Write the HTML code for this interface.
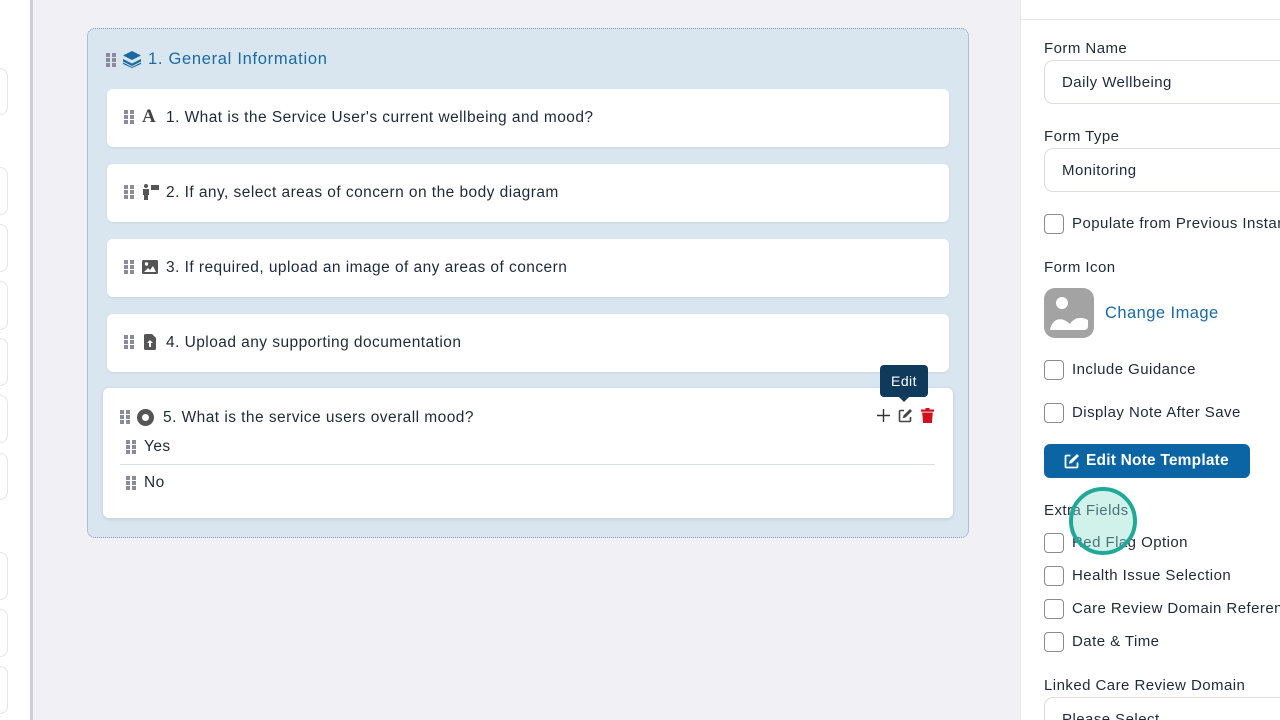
<!DOCTYPE html>
<html><head><style>
*{box-sizing:border-box;margin:0;padding:0}
html,body{width:1280px;height:720px;overflow:hidden}
body{background:#f1f0f5;font-family:"Liberation Sans",sans-serif;color:#1e2a3a;position:relative;letter-spacing:0.45px}
.abs{position:absolute}
.left{left:0;top:0;width:33px;height:720px;background:#fff;border-right:3px solid #cfcddc}
.lin{position:absolute;left:-10px;width:18px;border:1px solid #e4e4ea;border-radius:8px;background:#fff}
.sec{left:87px;top:28px;width:882px;height:510px;background:#d9e6f0;border:1.5px dotted #7f9fb8;border-radius:8px}
.card{position:absolute;left:107px;width:842px;height:58px;background:#fff;border-radius:6px;box-shadow:0 1px 2px rgba(0,0,0,.08)}
.q{position:absolute;left:59px;top:20px;font-size:15.5px;color:#1e2a3a;white-space:nowrap}
.grip{position:absolute;width:10px;height:14px}
.ico{position:absolute}
.right{left:1020px;top:0;width:260px;height:720px;background:#fff;border-left:1px solid #e6e6ec;overflow:hidden}
.lbl{position:absolute;left:23px;font-size:15px;color:#1e2a3a;white-space:nowrap}
.inp{position:absolute;left:23px;width:260px;height:44px;border:1px solid #dcdce2;border-radius:9px;font-size:15px;padding:13px 0 0 17px;color:#1e2a3a;white-space:nowrap}
.cb{position:absolute;left:23px;width:20px;height:20px;border:1.3px solid #8a8a92;border-radius:4px;background:#fff}
.ct{position:absolute;left:51px;font-size:15px;white-space:nowrap;color:#1e2a3a}
</style></head><body>
<div class="abs left">
<div class="lin" style="top:68px;height:47px"></div>
<div class="lin" style="top:167px;height:48px"></div>
<div class="lin" style="top:224px;height:48px"></div>
<div class="lin" style="top:281px;height:49px"></div>
<div class="lin" style="top:338px;height:48px"></div>
<div class="lin" style="top:395px;height:48px"></div>
<div class="lin" style="top:453px;height:47px"></div>
<div class="lin" style="top:552px;height:48px"></div>
<div class="lin" style="top:609px;height:48px"></div>
<div class="lin" style="top:666px;height:48px"></div>
</div>

<div class="abs sec"></div>
<svg class="abs" style="left:106px;top:53px" width="11" height="14"><g fill="#8a8a9a"><rect x="0" y="0" width="4" height="4"/><rect x="6" y="0" width="4" height="4"/><rect x="0" y="5" width="4" height="4"/><rect x="6" y="5" width="4" height="4"/><rect x="0" y="10" width="4" height="4"/><rect x="6" y="10" width="4" height="4"/></g></svg>
<svg class="abs" style="left:123px;top:51px" width="18" height="17" viewBox="0 0 18 17"><g fill="#1a6aa0"><path d="M9 0L18 4.5 9 9 0 4.5z"/><path d="M0 8l9 4.5L18 8v2.5L9 15 0 10.5z"/><path d="M0 11.5l9 4.5 9-4.5V13L9 17 0 13z"/></g></svg>
<div class="abs" style="left:148px;top:50px;font-size:16.5px;color:#1a6aa0;letter-spacing:0.7px">1. General Information</div>

<div class="card" style="top:89px"><svg class="grip" style="left:17px;top:21px"><g fill="#8a8a9a"><rect width="4" height="4"/><rect x="6" width="4" height="4"/><rect y="5" width="4" height="4"/><rect x="6" y="5" width="4" height="4"/><rect y="10" width="4" height="4"/><rect x="6" y="10" width="4" height="4"/></g></svg><div class="ico" style="left:35px;top:17px;font-size:19px;font-weight:bold;font-family:'Liberation Serif',serif;color:#444">A</div><div class="q">1. What is the Service User's current wellbeing and mood?</div></div>
<div class="card" style="top:164px"><svg class="grip" style="left:17px;top:21px"><g fill="#8a8a9a"><rect width="4" height="4"/><rect x="6" width="4" height="4"/><rect y="5" width="4" height="4"/><rect x="6" y="5" width="4" height="4"/><rect y="10" width="4" height="4"/><rect x="6" y="10" width="4" height="4"/></g></svg><svg class="ico" style="left:35px;top:20px" width="17" height="16"><g fill="#555"><circle cx="4" cy="2" r="2"/><rect x="1" y="5" width="6" height="6"/><rect x="2" y="10" width="4" height="6"/><rect x="9" y="1" width="8" height="5"/></g></svg><div class="q">2. If any, select areas of concern on the body diagram</div></div>
<div class="card" style="top:239px"><svg class="grip" style="left:17px;top:21px"><g fill="#8a8a9a"><rect width="4" height="4"/><rect x="6" width="4" height="4"/><rect y="5" width="4" height="4"/><rect x="6" y="5" width="4" height="4"/><rect y="10" width="4" height="4"/><rect x="6" y="10" width="4" height="4"/></g></svg><svg class="ico" style="left:35px;top:21px" width="16" height="14"><rect width="16" height="14" rx="1.5" fill="#555"/><circle cx="4.5" cy="4" r="1.7" fill="#fff"/><path d="M2 12l4-4 2 2 3-4 3 6z" fill="#fff"/></svg><div class="q">3. If required, upload an image of any areas of concern</div></div>
<div class="card" style="top:314px"><svg class="grip" style="left:17px;top:21px"><g fill="#8a8a9a"><rect width="4" height="4"/><rect x="6" width="4" height="4"/><rect y="5" width="4" height="4"/><rect x="6" y="5" width="4" height="4"/><rect y="10" width="4" height="4"/><rect x="6" y="10" width="4" height="4"/></g></svg><svg class="ico" style="left:37px;top:20px" width="12" height="16"><path d="M0 1.5Q0 0 1.5 0H8l4 4v10.5Q12 16 10.5 16h-9Q0 16 0 14.5z" fill="#555"/><path d="M6 6l3 3H7v4H5V9H3z" fill="#fff"/></svg><div class="q">4. Upload any supporting documentation</div></div>

<div class="card" style="top:388px;left:103px;width:850px;height:130px;box-shadow:0 1px 4px rgba(0,0,0,.12)">
<svg class="grip" style="left:17px;top:22px"><g fill="#8a8a9a"><rect width="4" height="4"/><rect x="6" width="4" height="4"/><rect y="5" width="4" height="4"/><rect x="6" y="5" width="4" height="4"/><rect y="10" width="4" height="4"/><rect x="6" y="10" width="4" height="4"/></g></svg>
<svg class="ico" style="left:34px;top:21px" width="17" height="17"><circle cx="8.5" cy="8.5" r="8.5" fill="#555"/><circle cx="8.5" cy="8.5" r="3.5" fill="#fff"/></svg>
<div class="q" style="left:60px;top:21px">5. What is the service users overall mood?</div>
<svg class="grip" style="left:23px;top:52px"><g fill="#8a8a9a"><rect width="4" height="4"/><rect x="6" width="4" height="4"/><rect y="5" width="4" height="4"/><rect x="6" y="5" width="4" height="4"/><rect y="10" width="4" height="4"/><rect x="6" y="10" width="4" height="4"/></g></svg>
<div class="q" style="left:41px;top:50px">Yes</div>
<div class="abs" style="left:17px;top:76px;width:815px;height:1px;background:#d8dde4"></div>
<svg class="grip" style="left:23px;top:88px"><g fill="#8a8a9a"><rect width="4" height="4"/><rect x="6" width="4" height="4"/><rect y="5" width="4" height="4"/><rect x="6" y="5" width="4" height="4"/><rect y="10" width="4" height="4"/><rect x="6" y="10" width="4" height="4"/></g></svg>
<div class="q" style="left:41px;top:86px">No</div>
<svg class="ico" style="left:773px;top:20px" width="15" height="15"><path d="M7.5 1v13M1 7.5h13" stroke="#333" stroke-width="1.4"/></svg>
<svg class="ico" style="left:795px;top:20px" width="15" height="15"><path d="M6 2.5H2.5a1 1 0 0 0-1 1v9a1 1 0 0 0 1 1h9a1 1 0 0 0 1-1V9" fill="none" stroke="#444" stroke-width="1.6"/><path d="M12 1l2 2-6.5 6.5-2.8.8.8-2.8z" fill="#444"/></svg>
<svg class="ico" style="left:818px;top:20px" width="13" height="15"><rect x="0" y="1.5" width="13" height="2.2" fill="#d0101e"/><rect x="4.5" y="0" width="4" height="2" fill="#d0101e"/><path d="M1.2 4.5h10.6l-.9 10.5H2.1z" fill="#d0101e"/></svg>
</div>
<div class="abs" style="left:880px;top:365px;width:48px;height:32px;background:#0f3a5c;border-radius:4px;color:#fff;font-size:14px;text-align:center;line-height:32px">Edit</div>
<div class="abs" style="left:898px;top:396px;width:0;height:0;border-left:6px solid transparent;border-right:6px solid transparent;border-top:6px solid #0f3a5c"></div>

<div class="abs right">
<div class="abs" style="left:0;top:19px;width:260px;height:1px;background:#e6e6ec"></div>
<div class="lbl" style="top:40px">Form Name</div>
<div class="inp" style="top:60px">Daily Wellbeing</div>
<div class="lbl" style="top:128px">Form Type</div>
<div class="inp" style="top:148px">Monitoring</div>
<div class="cb" style="top:214px"></div><div class="ct" style="top:215px">Populate from Previous Instance</div>
<div class="lbl" style="top:259px">Form Icon</div>
<svg class="abs" style="left:23px;top:288px" width="50" height="50"><rect width="50" height="50" rx="11" fill="#a3a3a3"/><circle cx="18" cy="15" r="6" fill="#fff"/><path d="M6 42c2-12 12-14 20-6 4-6 10-8 18-4v6q0 4-4 4z" fill="#fff"/></svg>
<div class="abs" style="left:84px;top:304px;font-size:16.5px;color:#1a6aa0">Change Image</div>
<div class="cb" style="top:360px"></div><div class="ct" style="top:361px">Include Guidance</div>
<div class="cb" style="top:403px"></div><div class="ct" style="top:404px">Display Note After Save</div>
<div class="abs" style="left:23px;top:444px;width:206px;height:34px;background:#0b64a3;border-radius:6px;color:#fff;font-size:15.5px;font-weight:bold;line-height:34px;padding-left:42px;letter-spacing:0.2px">Edit Note Template</div>
<svg class="abs" style="left:43px;top:453px" width="16" height="16"><path d="M6.5 2.5H2.5a1 1 0 0 0-1 1v10a1 1 0 0 0 1 1h10a1 1 0 0 0 1-1V9.5" fill="none" stroke="#fff" stroke-width="1.8"/><path d="M13 1l2 2-7 7-3 .8.8-3z" fill="#fff"/></svg>
<div class="lbl" style="top:502px">Extra Fields</div>
<div class="cb" style="top:533px"></div><div class="ct" style="top:534px">Red Flag Option</div>
<div class="cb" style="top:566px"></div><div class="ct" style="top:567px">Health Issue Selection</div>
<div class="cb" style="top:599px"></div><div class="ct" style="top:600px">Care Review Domain Reference</div>
<div class="cb" style="top:632px"></div><div class="ct" style="top:633px">Date &amp; Time</div>
<div class="lbl" style="top:677px">Linked Care Review Domain</div>
<div class="inp" style="top:697px">Please Select</div>
<div class="abs" style="left:48px;top:487px;width:68px;height:68px;border-radius:50%;border:4px solid #22a896;background:rgba(140,220,205,.4)"></div>
</div>
</body></html>
